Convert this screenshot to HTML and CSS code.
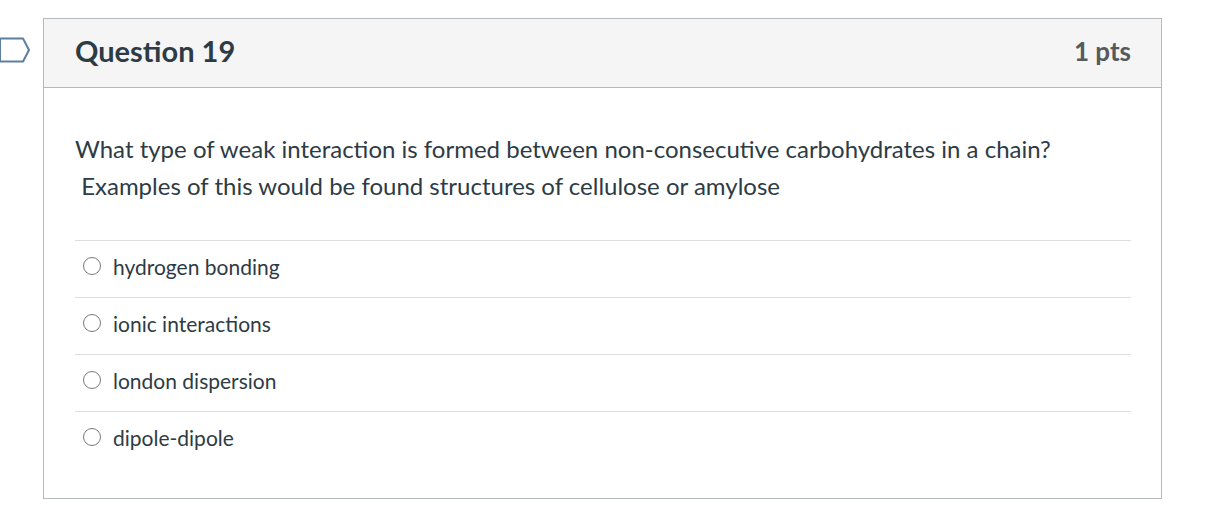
FILE: index.html
```html
<!DOCTYPE html>
<html>
<head>
<meta charset="utf-8">
<link rel="stylesheet" href="styles.css">
</head>
<body>
<div class="page">
  <div class="flag">
    <svg width="32" height="26" viewBox="0 0 32 26"><path d="M1 1.5 H24 L30 13 L24 24.5 H1 Z" fill="#fff" stroke="#5b7fa0" stroke-width="2" stroke-linejoin="round"/></svg>
  </div>
  <div class="card">
    <div class="header">
      <h2 class="title">Question 19</h2>
      <span class="pts">1 pts</span>
    </div>
    <div class="body">
      <p class="qtext">What type of weak interaction is formed between non-consecutive carbohydrates in a chain?<br>&nbsp;Examples of this would be found structures of cellulose or amylose</p>
      <ul class="answers">
        <li class="answer"><span class="radio"></span><span class="label">hydrogen bonding</span></li>
        <li class="answer"><span class="radio"></span><span class="label">ionic interactions</span></li>
        <li class="answer"><span class="radio"></span><span class="label">london dispersion</span></li>
        <li class="answer"><span class="radio"></span><span class="label">dipole-dipole</span></li>
      </ul>
    </div>
  </div>
</div>
</body>
</html>
```
FILE: styles.css
```css
html, body {
  margin: 0;
  padding: 0;
  background: #fff;
}
body {
  font-family: Lato, "Open Sans", sans-serif;
  color: #2d3b45;
}
.page {
  position: relative;
  padding: 18px 0 0 43px;
  width: 1119px;
}
.flag {
  position: absolute;
  left: -1px;
  top: 37px;
  line-height: 0;
}
.card {
  border: 1px solid #b4b9bd;
  width: 1117px;
  height: 479px;
}
.header {
  background: #f5f5f5;
  border-bottom: 1px solid #b4b9bd;
  height: 69px;
  box-sizing: border-box;
  padding: 0 30px 5px 31px;
  display: flex;
  align-items: center;
  justify-content: space-between;
}
.title {
  margin: 0;
  font-size: 29px;
  font-weight: 700;
  color: #2d3b45;
}
.pts {
  font-size: 26px;
  font-weight: 700;
  color: #565a5c;
}
.body {
  padding: 42px 30px 0 31px;
}
.qtext {
  margin: 0;
  font-size: 24px;
  line-height: 37px;
  color: #2d3b45;
}
.answers {
  list-style: none;
  margin: 36px 0 0;
  padding: 0;
}
.answer {
  border-top: 1px solid #dcdee0;
  height: 56px;
  display: flex;
  align-items: center;
  padding-left: 8px;
}
.answer > * {
  position: relative;
  top: -3px;
}
.radio {
  width: 18px;
  height: 18px;
  border: 1.3px solid #76797c;
  border-radius: 50%;
  box-sizing: border-box;
  margin-right: 12px;
}
.label {
  font-size: 21px;
  color: #2d3b45;
}
```
